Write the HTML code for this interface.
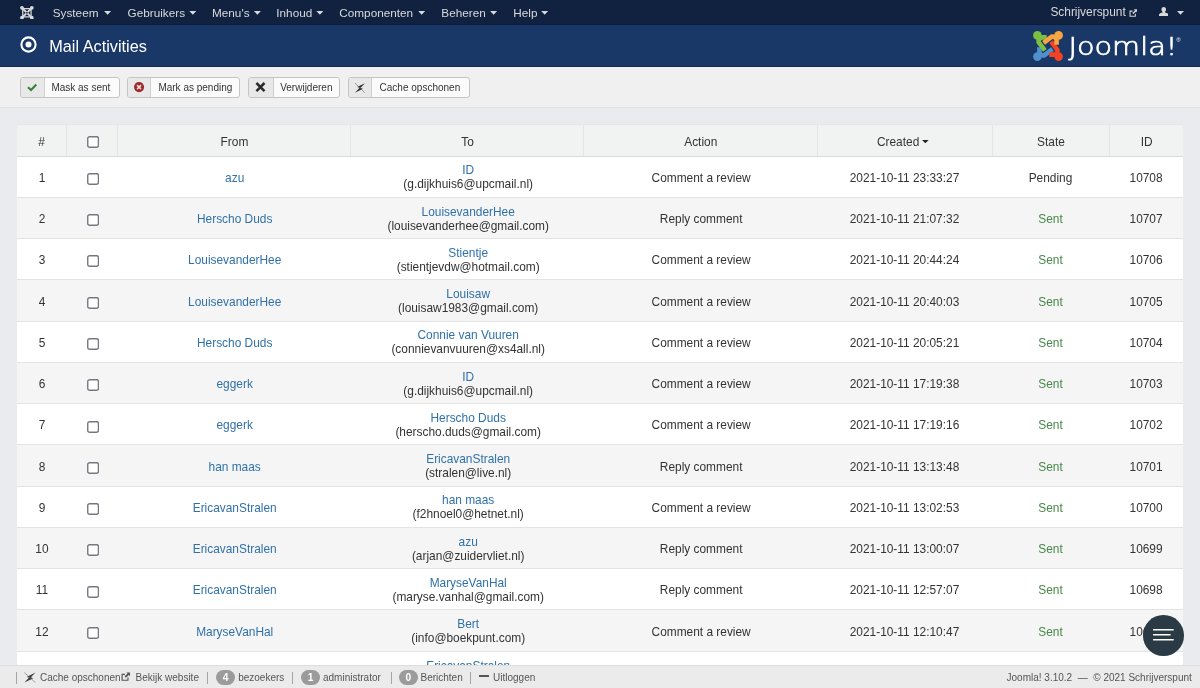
<!DOCTYPE html>
<html lang="nl"><head><meta charset="utf-8"><title>Mail Activities</title>
<style>
*{box-sizing:border-box}
html,body{margin:0;padding:0}
html{width:1200px;height:688px;overflow:hidden}
body{will-change:transform;width:1200px;height:688px;overflow:hidden;position:relative;background:#e9ebef;font-family:"Liberation Sans",Arial,sans-serif;font-size:11.9px;color:#333}
a{color:#3071a9;text-decoration:none}
/* navbar */
#nav{position:absolute;left:0;top:0;width:1200px;height:25px;background:#102240;border-bottom:1px solid #0b1c3c}
#nav .jico{position:absolute;left:19.8px;top:5.6px;width:13.8px;height:13.6px}
#nav .ni{position:absolute;top:0;line-height:25.8px;color:#d9d9d9;white-space:nowrap;font-size:11.75px}
.car{position:absolute;top:11px;width:7px;height:3.7px;background:#d9d9d9;clip-path:polygon(0 0,100% 0,50% 100%)}
#nav .right{position:absolute;top:0;height:24px;line-height:25.8px;color:#d9d9d9}
/* header */
#hdr{position:absolute;left:0;top:25px;width:1200px;height:41.6px;background:#1a3867;border-bottom:1px solid #132b52}
#hdr h1{position:absolute;left:49.2px;top:0;margin:0;font-size:16.3px;font-weight:normal;color:#fff;line-height:42.8px;white-space:nowrap}
#hdr .tico{position:absolute;left:19.6px;top:10.8px;width:17px;height:17px}
#logo{position:absolute;left:1031px;top:4.8px;width:160px;height:33px}
/* subhead */
#sub{position:absolute;left:0;top:66.6px;width:1200px;height:41.6px;background:#f0f0f0;border-bottom:1px solid #e1e2e5}
.btn{position:absolute;top:10.8px;height:21px;border:1px solid #c4c4c4;border-radius:3px;background:#fbfbfb;font-size:10px;line-height:19px;color:#333;white-space:nowrap;overflow:hidden}
.btn .ic{position:absolute;left:0;top:0;width:24px;height:19px;background:#e8e8e8;border-right:1px solid #cfcfcf}
.btn .ic svg{position:absolute;left:0;top:0}
.btn .tx{position:absolute;left:31px;top:0}
/* table */
#tbl{position:absolute;left:16.8px;top:124.45px;width:1166.4px;height:545px;overflow:hidden;background:#fff}
.h{display:flex;height:32.1px;background:#f1f3f3;border-bottom:1px solid #d9dbdb;border-top:1px solid #e4e6e8}
.h .c{border-left:1px solid #e3e5e6;padding-top:9.25px;padding-left:0}
.h .c:first-child{border-left:none}
.r{display:flex;height:41.27px;border-bottom:1px solid #e3e3e3;background:#fff}
.r.odd{background:#f5f5f5}
.c{display:block;position:relative;text-align:center;line-height:14px;white-space:nowrap;flex:none;padding-top:14.3px}
.r .c4{padding-top:6.8px;line-height:14px}
.c3{padding-left:1.4px}.c4{padding-left:2.4px}.c5{padding-left:1.8px}
.c1{padding-left:0.8px}
.c1{width:49.5px}.c2{width:51.2px}.c3{width:233px}.c4{width:233px}.c5{width:233.5px}.c6{width:175px}.c7{width:117px}.c8{width:74.2px}
.cb{position:absolute;left:19.4px;top:10.95px;width:12.2px;height:12px}
.r .cb{left:21px;top:16.4px}
.st.sent{color:#468847}
/* status */
#status{position:absolute;left:0;top:665.4px;width:1200px;height:22.6px;background:#ebebeb;border-top:1px solid #dedede;font-size:10px;color:#555;z-index:5;overflow:hidden}
#status span,#status i,#status svg{position:absolute}
#status .t{top:0;line-height:24.2px;white-space:nowrap}
#status .sep{top:5.2px;width:1px;height:12.4px;background:#a4a4a4}
#status .bd{top:3.4px;height:15px;border-radius:7.5px;background:#9b9b9b;color:#fff;font-weight:bold;font-size:10.2px;line-height:15px;text-align:center}
/* fab */
#fab{position:absolute;left:1143.3px;top:615.2px;width:40.5px;height:40.4px;border-radius:50%;background:#2a3b45;z-index:3}
#fab i{position:absolute;left:10.2px;height:1.5px;background:#fff}
</style></head>
<body>
<div id="nav">
 <svg class="jico" viewBox="0 0 16 16"><g fill="none" stroke="#d6d6d6"><path d="M2.6 2.6 L13.4 13.4 M13.4 2.6 L2.6 13.4" stroke-width="2.3"/><rect x="3.1" y="3.1" width="9.8" height="9.8" rx="1" stroke-width="1.5"/></g><g fill="#d9d9d9"><circle cx="2.2" cy="2.2" r="2.2"/><circle cx="13.8" cy="2.2" r="2.2"/><circle cx="2.2" cy="13.8" r="2.2"/><circle cx="13.8" cy="13.8" r="2.2"/></g><path d="M8 6.7 L9.3 8 L8 9.3 L6.7 8Z" fill="#102240"/></svg>
 <span class="ni" style="left:52.75px">Systeem</span><span class="car" style="left:104.1px"></span>
 <span class="ni" style="left:127.6px">Gebruikers</span><span class="car" style="left:189.3px"></span>
 <span class="ni" style="left:212px">Menu's</span><span class="car" style="left:253.9px"></span>
 <span class="ni" style="left:276.3px">Inhoud</span><span class="car" style="left:316.4px"></span>
 <span class="ni" style="left:339.3px">Componenten</span><span class="car" style="left:418.2px"></span>
 <span class="ni" style="left:441.3px">Beheren</span><span class="car" style="left:490.1px"></span>
 <span class="ni" style="left:513.3px">Help</span><span class="car" style="left:541.2px"></span>
 <span class="right" style="left:1050.4px">Schrijverspunt</span>
 <svg style="position:absolute;left:1128.8px;top:8.9px;width:8.6px;height:8.2px" viewBox="0 0 10 10" preserveAspectRatio="none"><path d="M7.4 5.8 V8.8 H1.2 V2.6 H4.2" fill="none" stroke="#d0d0d0" stroke-width="1.25"/><path d="M5.6 .4 H9.6 V4.4 L8.3 3.1 L5.2 6.2 L3.8 4.8 L6.9 1.7 Z" fill="#d0d0d0"/></svg>
 <svg style="position:absolute;left:1158.8px;top:7.4px;width:9.5px;height:9px" viewBox="0 0 10 10" preserveAspectRatio="none"><path d="M5 0 C6.6 0 7.4 1.2 7.4 2.8 C7.4 4 6.9 5 6.2 5.5 V6.2 C8 6.6 10 7.4 10 8.6 V10 H0 V8.6 C0 7.4 2 6.6 3.8 6.2 V5.5 C3.1 5 2.6 4 2.6 2.8 C2.6 1.2 3.4 0 5 0Z" fill="#d9d9d9"/></svg>
 <span class="car" style="left:1177px"></span>
</div>

<div id="hdr">
 <svg class="tico" viewBox="0 0 17 17"><circle cx="8.5" cy="8.5" r="7.1" fill="none" stroke="#fff" stroke-width="2.1"/><circle cx="8.5" cy="8.5" r="3" fill="#fff"/></svg>
 <h1>Mail Activities</h1>
 <svg id="logo" viewBox="0 0 160 33">
  <g transform="translate(2,1)">
   <g transform="rotate(270 15 15)"><path d="M13.7 6.4 L9.4 6.4 Q5.6 6.4 5.6 10.2 L5.6 11.2 L11.9 19.4" fill="none" stroke="#5091cd" stroke-width="4.6" stroke-linejoin="round"/><circle cx="4.4" cy="4.4" r="4.3" fill="#5091cd"/></g>
   <g transform="rotate(180 15 15)"><path d="M13.7 6.4 L9.4 6.4 Q5.6 6.4 5.6 10.2 L5.6 11.2 L11.9 19.4" fill="none" stroke="#f44321" stroke-width="4.6" stroke-linejoin="round"/><circle cx="4.4" cy="4.4" r="4.3" fill="#f44321"/></g>
   <g transform="rotate(0 15 15)"><path d="M13.7 6.4 L9.4 6.4 Q5.6 6.4 5.6 10.2 L5.6 11.2 L11.9 19.4" fill="none" stroke="#7ac143" stroke-width="4.6" stroke-linejoin="round"/><circle cx="4.4" cy="4.4" r="4.3" fill="#7ac143"/></g>
   <g transform="rotate(90 15 15)"><path d="M13.7 6.4 L9.4 6.4 Q5.6 6.4 5.6 10.2 L5.6 11.2 L11.9 19.4" fill="none" stroke="#f9a541" stroke-width="4.6" stroke-linejoin="round"/><circle cx="4.4" cy="4.4" r="4.3" fill="#f9a541"/></g>
  </g>
  <text id="jt" transform="translate(37.4 25.2) scale(1.2 1)" x="0" y="0" font-family="DejaVu Sans Light, DejaVu Sans, Liberation Sans, sans-serif" font-weight="200" font-size="24" fill="#fff" stroke="#fff" stroke-width="0.7">Joomla!</text>
  <text x="145.6" y="11.6" font-family="Liberation Sans, Arial, sans-serif" font-size="5.5" fill="#fff">®</text>
 </svg>
</div>

<div id="sub">
 <div class="btn" style="left:20.2px;width:99.6px"><span class="ic" style="width:23.6px"><svg width="24" height="19" viewBox="0 0 24 19"><path d="M7 9.2 L10.05 12.05 L15.3 6.6" fill="none" stroke="#37813a" stroke-width="2.1"/></svg></span><span class="tx" style="left:30.2px">Mask as sent</span></div>
 <div class="btn" style="left:127.2px;width:113.2px"><span class="ic" style="width:23.2px"><svg width="24" height="19" viewBox="0 0 24 19"><circle cx="11.05" cy="9.1" r="5.05" fill="#9d2a2a"/><path d="M9.05 7.1 L13.05 11.1 M13.05 7.1 L9.05 11.1" stroke="#f6dede" stroke-width="1.5"/></svg></span><span class="tx" style="left:30.2px">Mark as pending</span></div>
 <div class="btn" style="left:248.2px;width:92.2px"><span class="ic" style="width:24.4px"><svg width="24" height="19" viewBox="0 0 24 19"><path d="M7.43 5 L15.49 13.05 M15.49 5 L7.43 13.05" stroke="#2a2a2a" stroke-width="2.5"/></svg></span><span class="tx" style="left:31px">Verwijderen</span></div>
 <div class="btn" style="left:348.2px;width:121.5px"><span class="ic" style="width:23.2px"><svg width="24" height="19" viewBox="0 0 24 19"><path d="M15.94 5.16 L8.13 9.1 L11.38 10.12 Z M5.97 14.72 L13.99 10.73 L10.65 9.71 Z" fill="#2e2e2e"/><path d="M5.97 5.16 L15.94 14.72" stroke="#555" stroke-width=".55"/></svg></span><span class="tx" style="left:30.4px">Cache opschonen</span></div>
</div>

<div id="tbl">
<div class="h"><div class="c c1">#</div><div class="c c2"><svg class="cb" viewBox="0 0 12.2 12"><rect x="0.75" y="0.75" width="10.7" height="10.5" rx="1.8" fill="#fff" stroke="#777783" stroke-width="1.4"/></svg></div><div class="c c3">From</div><div class="c c4">To</div><div class="c c5">Action</div><div class="c c6">Created<span style="display:inline-block;width:7px;height:3.6px;background:#222;clip-path:polygon(0 0,100% 0,50% 100%);margin-left:2.6px;margin-right:4.2px;position:relative;top:-2.4px"></span></div><div class="c c7">State</div><div class="c c8">ID</div></div>
<div class="r"><div class="c c1">1</div><div class="c c2"><svg class="cb" viewBox="0 0 12.2 12"><rect x="0.75" y="0.75" width="10.7" height="10.5" rx="1.8" fill="#fff" stroke="#777783" stroke-width="1.4"/></svg></div><div class="c c3"><a>azu</a></div><div class="c c4"><div><a>ID</a><br>(g.dijkhuis6@upcmail.nl)</div></div><div class="c c5">Comment a review</div><div class="c c6">2021-10-11 23:33:27</div><div class="c c7 st pend">Pending</div><div class="c c8">10708</div></div>
<div class="r odd"><div class="c c1">2</div><div class="c c2"><svg class="cb" viewBox="0 0 12.2 12"><rect x="0.75" y="0.75" width="10.7" height="10.5" rx="1.8" fill="#fff" stroke="#777783" stroke-width="1.4"/></svg></div><div class="c c3"><a>Herscho Duds</a></div><div class="c c4"><div><a>LouisevanderHee</a><br>(louisevanderhee@gmail.com)</div></div><div class="c c5">Reply comment</div><div class="c c6">2021-10-11 21:07:32</div><div class="c c7 st sent">Sent</div><div class="c c8">10707</div></div>
<div class="r"><div class="c c1">3</div><div class="c c2"><svg class="cb" viewBox="0 0 12.2 12"><rect x="0.75" y="0.75" width="10.7" height="10.5" rx="1.8" fill="#fff" stroke="#777783" stroke-width="1.4"/></svg></div><div class="c c3"><a>LouisevanderHee</a></div><div class="c c4"><div><a>Stientje</a><br>(stientjevdw@hotmail.com)</div></div><div class="c c5">Comment a review</div><div class="c c6">2021-10-11 20:44:24</div><div class="c c7 st sent">Sent</div><div class="c c8">10706</div></div>
<div class="r odd"><div class="c c1">4</div><div class="c c2"><svg class="cb" viewBox="0 0 12.2 12"><rect x="0.75" y="0.75" width="10.7" height="10.5" rx="1.8" fill="#fff" stroke="#777783" stroke-width="1.4"/></svg></div><div class="c c3"><a>LouisevanderHee</a></div><div class="c c4"><div><a>Louisaw</a><br>(louisaw1983@gmail.com)</div></div><div class="c c5">Comment a review</div><div class="c c6">2021-10-11 20:40:03</div><div class="c c7 st sent">Sent</div><div class="c c8">10705</div></div>
<div class="r"><div class="c c1">5</div><div class="c c2"><svg class="cb" viewBox="0 0 12.2 12"><rect x="0.75" y="0.75" width="10.7" height="10.5" rx="1.8" fill="#fff" stroke="#777783" stroke-width="1.4"/></svg></div><div class="c c3"><a>Herscho Duds</a></div><div class="c c4"><div><a>Connie van Vuuren</a><br>(connievanvuuren@xs4all.nl)</div></div><div class="c c5">Comment a review</div><div class="c c6">2021-10-11 20:05:21</div><div class="c c7 st sent">Sent</div><div class="c c8">10704</div></div>
<div class="r odd"><div class="c c1">6</div><div class="c c2"><svg class="cb" viewBox="0 0 12.2 12"><rect x="0.75" y="0.75" width="10.7" height="10.5" rx="1.8" fill="#fff" stroke="#777783" stroke-width="1.4"/></svg></div><div class="c c3"><a>eggerk</a></div><div class="c c4"><div><a>ID</a><br>(g.dijkhuis6@upcmail.nl)</div></div><div class="c c5">Comment a review</div><div class="c c6">2021-10-11 17:19:38</div><div class="c c7 st sent">Sent</div><div class="c c8">10703</div></div>
<div class="r"><div class="c c1">7</div><div class="c c2"><svg class="cb" viewBox="0 0 12.2 12"><rect x="0.75" y="0.75" width="10.7" height="10.5" rx="1.8" fill="#fff" stroke="#777783" stroke-width="1.4"/></svg></div><div class="c c3"><a>eggerk</a></div><div class="c c4"><div><a>Herscho Duds</a><br>(herscho.duds@gmail.com)</div></div><div class="c c5">Comment a review</div><div class="c c6">2021-10-11 17:19:16</div><div class="c c7 st sent">Sent</div><div class="c c8">10702</div></div>
<div class="r odd"><div class="c c1">8</div><div class="c c2"><svg class="cb" viewBox="0 0 12.2 12"><rect x="0.75" y="0.75" width="10.7" height="10.5" rx="1.8" fill="#fff" stroke="#777783" stroke-width="1.4"/></svg></div><div class="c c3"><a>han maas</a></div><div class="c c4"><div><a>EricavanStralen</a><br>(stralen@live.nl)</div></div><div class="c c5">Reply comment</div><div class="c c6">2021-10-11 13:13:48</div><div class="c c7 st sent">Sent</div><div class="c c8">10701</div></div>
<div class="r"><div class="c c1">9</div><div class="c c2"><svg class="cb" viewBox="0 0 12.2 12"><rect x="0.75" y="0.75" width="10.7" height="10.5" rx="1.8" fill="#fff" stroke="#777783" stroke-width="1.4"/></svg></div><div class="c c3"><a>EricavanStralen</a></div><div class="c c4"><div><a>han maas</a><br>(f2hnoel0@hetnet.nl)</div></div><div class="c c5">Comment a review</div><div class="c c6">2021-10-11 13:02:53</div><div class="c c7 st sent">Sent</div><div class="c c8">10700</div></div>
<div class="r odd"><div class="c c1">10</div><div class="c c2"><svg class="cb" viewBox="0 0 12.2 12"><rect x="0.75" y="0.75" width="10.7" height="10.5" rx="1.8" fill="#fff" stroke="#777783" stroke-width="1.4"/></svg></div><div class="c c3"><a>EricavanStralen</a></div><div class="c c4"><div><a>azu</a><br>(arjan@zuidervliet.nl)</div></div><div class="c c5">Reply comment</div><div class="c c6">2021-10-11 13:00:07</div><div class="c c7 st sent">Sent</div><div class="c c8">10699</div></div>
<div class="r"><div class="c c1">11</div><div class="c c2"><svg class="cb" viewBox="0 0 12.2 12"><rect x="0.75" y="0.75" width="10.7" height="10.5" rx="1.8" fill="#fff" stroke="#777783" stroke-width="1.4"/></svg></div><div class="c c3"><a>EricavanStralen</a></div><div class="c c4"><div><a>MaryseVanHal</a><br>(maryse.vanhal@gmail.com)</div></div><div class="c c5">Reply comment</div><div class="c c6">2021-10-11 12:57:07</div><div class="c c7 st sent">Sent</div><div class="c c8">10698</div></div>
<div class="r odd"><div class="c c1">12</div><div class="c c2"><svg class="cb" viewBox="0 0 12.2 12"><rect x="0.75" y="0.75" width="10.7" height="10.5" rx="1.8" fill="#fff" stroke="#777783" stroke-width="1.4"/></svg></div><div class="c c3"><a>MaryseVanHal</a></div><div class="c c4"><div><a>Bert</a><br>(info@boekpunt.com)</div></div><div class="c c5">Comment a review</div><div class="c c6">2021-10-11 12:10:47</div><div class="c c7 st sent">Sent</div><div class="c c8">10697</div></div>
<div class="r"><div class="c c1">13</div><div class="c c2"><svg class="cb" viewBox="0 0 12.2 12"><rect x="0.75" y="0.75" width="10.7" height="10.5" rx="1.8" fill="#fff" stroke="#777783" stroke-width="1.4"/></svg></div><div class="c c3"><a>MaryseVanHal</a></div><div class="c c4"><div><a>EricavanStralen</a><br>(stralen@live.nl)</div></div><div class="c c5">Comment a review</div><div class="c c6">2021-10-11 12:05:11</div><div class="c c7 st sent">Sent</div><div class="c c8">10696</div></div>
</div>

<div id="fab"><svg width="41" height="41" viewBox="0 0 41 41" style="position:absolute;left:0;top:0"><path d="M10.1 14.8 H30.7 M10.1 19.8 H27.6 M10.1 24.7 H30.7" stroke="#fff" stroke-width="1.45"/></svg></div>

<div id="status">
 <span class="sep" style="left:16.200px"></span>
 <svg style="left:24px;top:6px;width:12px;height:11px" viewBox="0 0 12 11"><path d="M11.4 0.6 L2.7 5 L6.3 6.1 Z M0.4 10.6 L9.3 6.2 L5.6 5.1 Z" fill="#3a3a3a"/><path d="M0.4 0.6 L11.4 10.6" stroke="#666" stroke-width=".6"/></svg>
 <span class="t" style="left:40px">Cache opschonen</span>
 <svg style="left:121.4px;top:5.6px;width:9.4px;height:9.4px" viewBox="0 0 10 10"><path d="M7.4 5.8 V8.8 H1.2 V2.6 H4.2" fill="none" stroke="#555" stroke-width="1.25"/><path d="M5.6 .4 H9.6 V4.4 L8.3 3.1 L5.2 6.2 L3.8 4.8 L6.9 1.700 Z" fill="#555"/></svg>
 <span class="t" style="left:135.600px">Bekijk website</span>
 <span class="sep" style="left:207.200px"></span>
 <span class="bd" style="left:216.200px;width:18.800px">4</span>
 <span class="t" style="left:238.200px">bezoekers</span>
 <span class="sep" style="left:292.200px"></span>
 <span class="bd" style="left:301.200px;width:18.800px">1</span>
 <span class="t" style="left:323px">administrator</span>
 <span class="sep" style="left:390.500px"></span>
 <span class="bd" style="left:399.200px;width:18.400px">0</span>
 <span class="t" style="left:420.500px">Berichten</span>
 <span class="sep" style="left:470.200px"></span>
 <i style="left:478.8px;top:8.8px;width:10px;height:2px;background:#555"></i>
 <span class="t" style="left:493px">Uitloggen</span>
 <span class="t" style="right:8.2px">Joomla! 3.10.2 &nbsp;—&nbsp; © 2021 Schrijverspunt</span>
</div>
</body></html>
